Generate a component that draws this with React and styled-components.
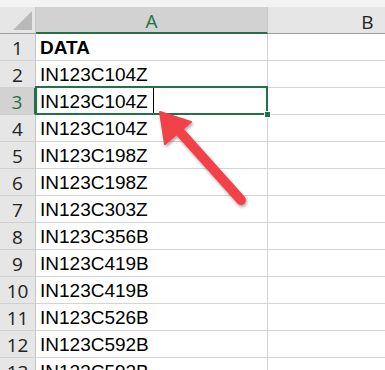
import React from "react";
import styled, { createGlobalStyle } from "styled-components";

const rows = [
  "DATA",
  "IN123C104Z",
  "IN123C104Z",
  "IN123C104Z",
  "IN123C198Z",
  "IN123C198Z",
  "IN123C303Z",
  "IN123C356B",
  "IN123C419B",
  "IN123C419B",
  "IN123C526B",
  "IN123C592B",
  "IN123C592B",
];

const App = () => {
  return (
    <>
      <GlobalStyle />
      <Page>
        <TopStrip />
        <Sheet>
          <Corner>
            <CornerTriangle />
          </Corner>
          <ColHeader active>A</ColHeader>
          <ColHeader>B</ColHeader>
          {rows.map((value, i) => (
            <React.Fragment key={i}>
              <RowHeader active={i === 2}>{i + 1}</RowHeader>
              <Cell bold={i === 0} selected={i === 2}>
                {value}
                {i === 2 && <Caret />}
              </Cell>
              <Cell />
            </React.Fragment>
          ))}
        </Sheet>
        <Arrow width="110" height="110" viewBox="0 0 110 110">
          <defs>
            <filter id="shadow" x="-20%" y="-20%" width="140%" height="140%">
              <feDropShadow dx="1" dy="2" stdDeviation="1.5" floodColor="#000" floodOpacity="0.35" />
            </filter>
          </defs>
          <g filter="url(#shadow)" fill="#f2424a" stroke="#f2424a">
            <line x1="22" y1="22" x2="91" y2="99" strokeWidth="10" strokeLinecap="round" />
            <polygon points="10,11 41,21 15,43" strokeWidth="2" strokeLinejoin="round" />
          </g>
        </Arrow>
      </Page>
    </>
  );
};

const GlobalStyle = createGlobalStyle`
  body {
    margin: 0;
    background: #ffffff;
    font-family: "Liberation Sans", Arial, sans-serif;
    overflow: hidden;
  }
`;

const Page = styled.div`
  position: relative;
  width: 385px;
  height: 370px;
  overflow: hidden;
`;

const TopStrip = styled.div`
  height: 7px;
  background: #f3f3f3;
`;

const Sheet = styled.div`
  display: grid;
  grid-template-columns: 36px 232px 200px;
  grid-auto-rows: 27px;
`;

const Corner = styled.div`
  position: relative;
  background: #e6e6e6;
  border-right: 1px solid #c6c6c6;
  border-bottom: 1px solid #9e9e9e;
`;

const CornerTriangle = styled.div`
  position: absolute;
  right: 3px;
  bottom: 3px;
  width: 0;
  height: 0;
  border-left: 19px solid transparent;
  border-bottom: 19px solid #b9b9b9;
`;

const ColHeader = styled.div`
  display: flex;
  align-items: center;
  justify-content: center;
  padding-top: 3px;
  font-family: "Open Sans", "Liberation Sans", sans-serif;
  font-size: 19px;
  color: ${(p) => (p.active ? "#217346" : "#222222")};
  background: ${(p) => (p.active ? "#d2d2d2" : "#e6e6e6")};
  border-right: 1px solid #c6c6c6;
  border-bottom: ${(p) => (p.active ? "2px solid #217346" : "1px solid #9e9e9e")};
  box-sizing: border-box;

  &:last-of-type {
    justify-content: flex-start;
    padding-left: 91px;
  }
`;

const RowHeader = styled.div`
  display: flex;
  align-items: center;
  justify-content: center;
  padding-top: 2px;
  font-family: "Open Sans", "Liberation Sans", sans-serif;
  font-size: 19px;
  color: ${(p) => (p.active ? "#217346" : "#222222")};
  background: ${(p) => (p.active ? "#d2d2d2" : "#e6e6e6")};
  border-right: ${(p) => (p.active ? "2px solid #217346" : "1px solid #c6c6c6")};
  border-bottom: 1px solid #d0d0d0;
  box-sizing: border-box;
`;

const Cell = styled.div`
  position: relative;
  display: flex;
  align-items: center;
  padding-left: 4px;
  padding-top: 2px;
  font-size: 19px;
  font-weight: ${(p) => (p.bold ? 700 : 400)};
  color: #000000;
  border-right: 1px solid #d4d4d4;
  border-bottom: 1px solid #d4d4d4;
  box-sizing: border-box;

  ${(p) =>
    p.selected &&
    `
    &::after {
      content: "";
      position: absolute;
      left: -1px;
      top: -2px;
      right: -1px;
      bottom: -1px;
      border: 2px solid #217346;
    }
    &::before {
      content: "";
      position: absolute;
      right: -4px;
      bottom: -4px;
      width: 5px;
      height: 5px;
      background: #217346;
      border: 1px solid #ffffff;
      z-index: 1;
    }
  `}
`;

const Caret = styled.span`
  display: inline-block;
  width: 1px;
  height: 26px;
  margin-left: 5px;
  margin-top: -2px;
  background: #000000;
`;

const Arrow = styled.svg`
  position: absolute;
  left: 150px;
  top: 101px;
  overflow: visible;
`;

export default App;
